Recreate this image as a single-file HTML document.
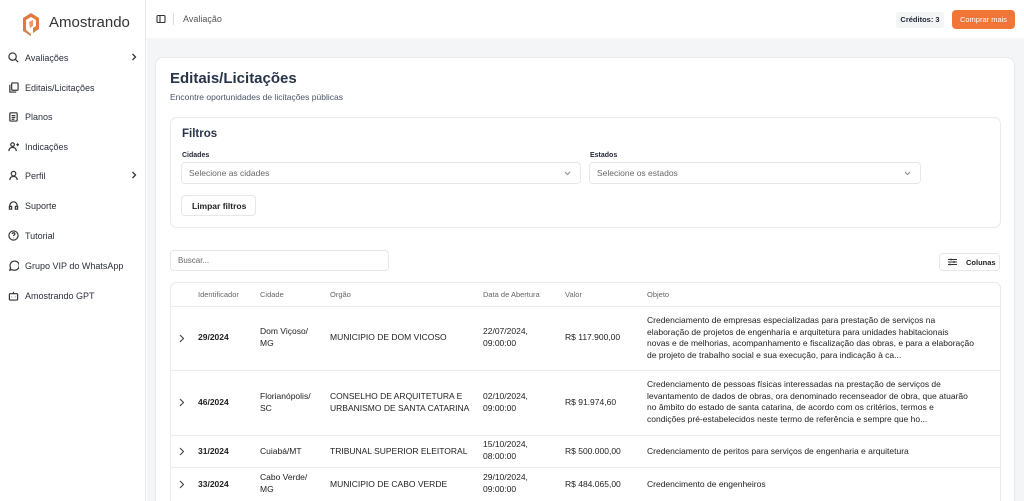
<!DOCTYPE html>
<html style="width:1024px;height:501px;overflow:hidden"><head><meta charset="utf-8"><style>
*{box-sizing:border-box;margin:0;padding:0}
body{width:1024px;height:501px;overflow:hidden;font-family:"Liberation Sans",sans-serif;color:#1f2430;background:#fff;position:relative}
.abs{position:absolute}
#side{left:0;top:0;width:146px;height:501px;border-right:1px solid #e6e8eb;background:#fff}
.nav{position:absolute;left:8px;font-size:9px;color:#2a2f3a;display:flex;align-items:center;width:130px}
.nav svg{width:11px;height:11px;margin-right:6px;stroke:#333;fill:none;stroke-width:1.3}
.nav svg.ch{position:absolute;right:0;top:1px;width:8px;height:8px;margin:0}
#main{left:147px;top:38px;width:877px;height:463px;background:#f3f5f7}
#card{left:155px;top:57px;width:860px;height:460px;background:#fff;border:1px solid #e8eaed;border-radius:8px}
.t{position:absolute;white-space:nowrap}
.inp{position:absolute;border:1px solid #e5e7ea;border-radius:4px;background:#fff;font-size:8.5px;color:#666;padding-left:7px;display:flex;align-items:center}
.row{position:absolute;left:170px;width:830px;border-top:1px solid #e9ebee}
.c{position:absolute;font-size:8.5px;line-height:11.5px;color:#222}
.h{position:absolute;font-size:7.5px;color:#666;top:290px}
.ar{position:absolute;left:178px;width:7px;height:9px}
</style></head><body>
<div id="side" class="abs">
 <svg class="abs" style="left:20px;top:11px" width="22" height="26" viewBox="0 0 22 26"><path d="M3 7 L11 2 L19 7 L19 18 L13 22 L13 17 L16 15 L16 9 L11 6 L6 9 L6 19 L11 23 L11 25 L3 20Z" fill="#e07a45"/><path d="M9 11 L13 9 L13 15 L10 17Z" fill="#e89a6a"/></svg>
 <div class="t" style="left:49px;top:14px;font-size:15px;color:#333">Amostrando</div>
 <div class="nav" style="top:52px"><svg viewBox="0 0 12 12"><circle cx="5" cy="5" r="4"/><path d="M8 8l3 3"/></svg>Avaliações<svg class="ch" viewBox="0 0 8 8"><path d="M2.5 1l3 3-3 3"/></svg></div>
 <div class="nav" style="top:82px"><svg viewBox="0 0 12 12"><rect x="4" y="1" width="7" height="8" rx="1"/><path d="M2 3v8h7"/></svg>Editais/Licitações</div>
 <div class="nav" style="top:111px"><svg viewBox="0 0 12 12"><rect x="2" y="2" width="8" height="9" rx="1"/><path d="M4 5h4M4 7h4M4 9h3"/></svg>Planos</div>
 <div class="nav" style="top:141px"><svg viewBox="0 0 12 12"><circle cx="5" cy="4" r="2"/><path d="M1 11c0-3 2-4 4-4s4 1 4 4M9 4h3M10.5 2.5v3"/></svg>Indicações</div>
 <div class="nav" style="top:170px"><svg viewBox="0 0 12 12"><circle cx="6" cy="4" r="2.5"/><path d="M2 11c0-3 2-4 4-4s4 1 4 4"/></svg>Perfil<svg class="ch" viewBox="0 0 8 8"><path d="M2.5 1l3 3-3 3"/></svg></div>
 <div class="nav" style="top:200px"><svg viewBox="0 0 12 12"><path d="M2 8V6a4 4 0 018 0v2"/><rect x="1.5" y="7" width="2.5" height="3"/><rect x="8" y="7" width="2.5" height="3"/></svg>Suporte</div>
 <div class="nav" style="top:230px"><svg viewBox="0 0 12 12"><circle cx="6" cy="6" r="5"/><path d="M4.5 4.5a1.5 1.5 0 113 0c0 1-1.5 1-1.5 2M6 8.5v.5"/></svg>Tutorial</div>
 <div class="nav" style="top:260px"><svg viewBox="0 0 12 12"><path d="M2 11l.8-2.5A5 5 0 116 11a5 5 0 01-2.2-.5z"/></svg>Grupo VIP do WhatsApp</div>
 <div class="nav" style="top:290px"><svg viewBox="0 0 12 12"><rect x="1.5" y="4" width="9" height="7" rx="1"/><path d="M6 4V2M4 7.5h.5M7.5 7.5h.5"/></svg>Amostrando GPT</div>
</div>
<svg class="abs" style="left:156px;top:14px" width="10" height="10" viewBox="0 0 10 10" fill="none" stroke="#333" stroke-width="1.1"><rect x="1" y="1.5" width="8" height="7" rx="1"/><path d="M4 1.5v7"/></svg>
<div class="abs" style="left:173px;top:13px;width:1px;height:12px;background:#ddd"></div>
<div class="t" style="left:183px;top:14px;font-size:9px;color:#555">Avaliação</div>
<div class="t" style="left:896px;top:12px;height:16px;width:48px;background:#f3f4f6;border-radius:3px;font-size:7.5px;font-weight:bold;text-align:center;line-height:16px">Créditos: 3</div>
<div class="t" style="left:952px;top:10px;height:19px;width:63px;background:#f07537;border-radius:4px;font-size:7.5px;color:#fff;text-align:center;line-height:19px">Comprar mais</div>
<div id="main" class="abs"></div>
<div id="card" class="abs"></div>
<div class="t" style="left:170px;top:70px;font-size:15px;font-weight:bold;color:#27344a">Editais/Licitações</div>
<div class="t" style="left:170px;top:92px;font-size:8.5px;color:#4a5568">Encontre oportunidades de licitações públicas</div>
<div class="abs" style="left:170px;top:117px;width:831px;height:111px;border:1px solid #e8eaed;border-radius:7px"></div>
<div class="t" style="left:182px;top:128px;font-size:11.5px;font-weight:bold;color:#27344a">Filtros</div>
<div class="t" style="left:182px;top:152px;font-size:7px;font-weight:bold">Cidades</div>
<div class="t" style="left:590px;top:152px;font-size:7px;font-weight:bold">Estados</div>
<div class="inp" style="left:181px;top:162px;width:400px;height:22px">Selecione as cidades<svg style="position:absolute;right:9px" width="7" height="5" viewBox="0 0 7 5" fill="none" stroke="#888"><path d="M1 1l2.5 2.5L6 1"/></svg></div>
<div class="inp" style="left:589px;top:162px;width:332px;height:22px">Selecione os estados<svg style="position:absolute;right:9px" width="7" height="5" viewBox="0 0 7 5" fill="none" stroke="#888"><path d="M1 1l2.5 2.5L6 1"/></svg></div>
<div class="inp" style="left:181px;top:195px;width:75px;height:21px;font-size:8.5px;font-weight:bold;color:#222;padding-left:10px">Limpar filtros</div>
<div class="inp" style="left:170px;top:250px;width:219px;height:21px;font-size:8px">Buscar...</div>
<div class="inp" style="left:939px;top:253px;width:61px;height:18px;font-size:7.5px;color:#222;font-weight:bold;padding-left:8px"><svg width="9" height="8" viewBox="0 0 9 8" fill="none" stroke="#333" style="margin-right:9px"><path d="M0 1.5h9M0 4h9M0 6.5h9M3 0.5v2M6 3v2M2 5.5v2"/></svg>Colunas</div>
<div class="abs" style="left:170px;top:282px;width:831px;height:230px;border:1px solid #e9ebee;border-radius:6px"></div>
<div class="h" style="left:198px">Identificador</div><div class="h" style="left:260px">Cidade</div><div class="h" style="left:330px">Orgão</div><div class="h" style="left:483px">Data de Abertura</div><div class="h" style="left:565px">Valor</div><div class="h" style="left:647px">Objeto</div>
<div class="row" style="top:306px"></div><div class="row" style="top:370px"></div><div class="row" style="top:435px"></div><div class="row" style="top:467px"></div>

<svg class="ar" style="top:334px" viewBox="0 0 7 9" fill="none" stroke="#444" stroke-width="1.1"><path d="M2 1l3.5 3.5L2 8"/></svg>
<div class="c" style="left:198px;top:332px;font-weight:bold">29/2024</div>
<div class="c" style="left:260px;top:326px">Dom Viçoso/<br>MG</div>
<div class="c" style="left:330px;top:332px">MUNICIPIO DE DOM VICOSO</div>
<div class="c" style="left:483px;top:326px">22/07/2024,<br>09:00:00</div>
<div class="c" style="left:565px;top:332px">R$ 117.900,00</div>
<div class="c" style="left:647px;top:315px">Credenciamento de empresas especializadas para prestação de serviços na<br>elaboração de projetos de engenharia e arquitetura para unidades habitacionais<br>novas e de melhorias, acompanhamento e fiscalização das obras, e para a elaboração<br>de projeto de trabalho social e sua execução, para indicação à ca...</div>

<svg class="ar" style="top:398px" viewBox="0 0 7 9" fill="none" stroke="#444" stroke-width="1.1"><path d="M2 1l3.5 3.5L2 8"/></svg>
<div class="c" style="left:198px;top:397px;font-weight:bold">46/2024</div>
<div class="c" style="left:260px;top:391px">Florianópolis/<br>SC</div>
<div class="c" style="left:330px;top:391px">CONSELHO DE ARQUITETURA E<br>URBANISMO DE SANTA CATARINA</div>
<div class="c" style="left:483px;top:391px">02/10/2024,<br>09:00:00</div>
<div class="c" style="left:565px;top:397px">R$ 91.974,60</div>
<div class="c" style="left:647px;top:379px">Credenciamento de pessoas físicas interessadas na prestação de serviços de<br>levantamento de dados de obras, ora denominado recenseador de obra, que atuarão<br>no âmbito do estado de santa catarina, de acordo com os critérios, termos e<br>condições pré-estabelecidos neste termo de referência e sempre que ho...</div>

<svg class="ar" style="top:447px" viewBox="0 0 7 9" fill="none" stroke="#444" stroke-width="1.1"><path d="M2 1l3.5 3.5L2 8"/></svg>
<div class="c" style="left:198px;top:446px;font-weight:bold">31/2024</div>
<div class="c" style="left:260px;top:446px">Cuiabá/MT</div>
<div class="c" style="left:330px;top:446px">TRIBUNAL SUPERIOR ELEITORAL</div>
<div class="c" style="left:483px;top:439px">15/10/2024,<br>08:00:00</div>
<div class="c" style="left:565px;top:446px">R$ 500.000,00</div>
<div class="c" style="left:647px;top:446px">Credenciamento de peritos para serviços de engenharia e arquitetura</div>

<svg class="ar" style="top:480px" viewBox="0 0 7 9" fill="none" stroke="#444" stroke-width="1.1"><path d="M2 1l3.5 3.5L2 8"/></svg>
<div class="c" style="left:198px;top:479px;font-weight:bold">33/2024</div>
<div class="c" style="left:260px;top:472px">Cabo Verde/<br>MG</div>
<div class="c" style="left:330px;top:479px">MUNICIPIO DE CABO VERDE</div>
<div class="c" style="left:483px;top:472px">29/10/2024,<br>09:00:00</div>
<div class="c" style="left:565px;top:479px">R$ 484.065,00</div>
<div class="c" style="left:647px;top:479px">Credencimento de engenheiros</div>
</body></html>
